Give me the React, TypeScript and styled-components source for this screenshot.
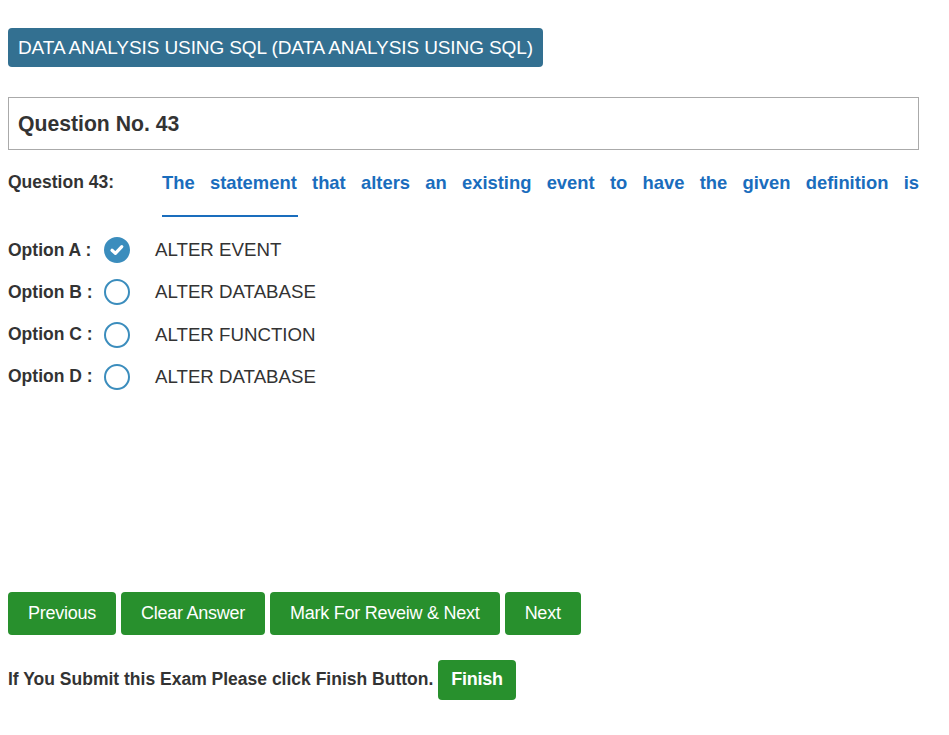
import React from "react";
import styled, { createGlobalStyle } from "styled-components";

const Global = createGlobalStyle`
  html, body { margin: 0; padding: 0; background: #fff; }
  body { font-family: "Liberation Sans", Arial, sans-serif; color: #333; }
`;

const Page = styled.div`
  padding: 28px 30px 0 8px;
  display: flex;
  flex-direction: column;
`;

const SubjectBadge = styled.div`
  align-self: flex-start;
  background: #337091;
  color: #fff;
  font-size: 19px;
  letter-spacing: -0.1px;
  line-height: 39px;
  height: 39px;
  padding: 0 10px;
  border-radius: 4px;
`;

const QuestionHead = styled.div`
  margin-top: 30px;
  border: 1px solid #aaa;
  height: 51px;
  display: flex;
  align-items: center;
  padding: 0 9px;
  font-size: 21.2px;
  font-weight: bold;
  color: #333;
`;

const QuestionRow = styled.div`
  margin-top: 20px;
  display: grid;
  grid-template-columns: 154px 1fr;
`;

const QuestionLabel = styled.div`
  font-size: 17.5px;
  font-weight: bold;
  line-height: 24px;
  color: #333;
`;

const QuestionText = styled.div`
  font-size: 18.4px;
  font-weight: bold;
  color: #1a6dbd;
  text-align: justify;
  line-height: 26px;
`;

const Blank = styled.span`
  display: inline-block;
  width: 136px;
  height: 19px;
  border-bottom: 2px solid #1a6dbd;
  vertical-align: top;
`;

const Options = styled.div`
  margin-top: 14px;
  display: flex;
  flex-direction: column;
  gap: 14.3px;
`;

const OptionRow = styled.div`
  display: flex;
  align-items: center;
  height: 28px;
`;

const OptionLabel = styled.span`
  width: 96px;
  font-size: 17.5px;
  font-weight: bold;
  color: #333;
  white-space: nowrap;
`;

const Radio = styled.span<{ $checked?: boolean }>`
  width: 26px;
  height: 26px;
  box-sizing: border-box;
  border-radius: 50%;
  border: 2px solid #3b8dbd;
  background: ${(p) => (p.$checked ? "#3b8dbd" : "#fff")};
  display: flex;
  align-items: center;
  justify-content: center;
`;

const OptionText = styled.span`
  margin-left: 25px;
  font-size: 18.7px;
  color: #333;
`;

const ButtonBar = styled.div`
  margin-top: 201px;
  display: flex;
  gap: 5px;
`;

const Button = styled.button<{ $bold?: boolean }>`
  background: #28902d;
  color: #fff;
  border: none;
  border-radius: 4px;
  font-family: "Liberation Sans", Arial, sans-serif;
  font-size: 18px;
  font-weight: ${(p) => (p.$bold ? "bold" : "normal")};
  letter-spacing: -0.25px;
  height: ${(p) => (p.$bold ? "40px" : "43px")};
  padding: 0 20px;
  cursor: pointer;
`;

const FinishRow = styled.div`
  margin-top: 25px;
  display: flex;
  align-items: center;
  gap: 5px;
`;

const FinishText = styled.span`
  font-size: 17.5px;
  font-weight: bold;
  color: #333;
`;

const FinishButton = styled(Button)`
  padding: 0 13px;
`;

const Check = () => (
  <svg width="16" height="16" viewBox="0 0 16 16">
    <path d="M3 8.3 L6.4 11.4 L12.8 4.6" fill="none" stroke="#fff" strokeWidth="3.2" strokeLinecap="round" strokeLinejoin="round" />
  </svg>
);

const options = [
  { key: "A", text: "ALTER EVENT", checked: true },
  { key: "B", text: "ALTER DATABASE" },
  { key: "C", text: "ALTER FUNCTION" },
  { key: "D", text: "ALTER DATABASE" },
];

export default function App() {
  return (
    <>
      <Global />
      <Page>
        <SubjectBadge>DATA ANALYSIS USING SQL (DATA ANALYSIS USING SQL)</SubjectBadge>
        <QuestionHead>Question No. 43</QuestionHead>
        <QuestionRow>
          <QuestionLabel>Question 43:</QuestionLabel>
          <QuestionText>
            The statement that alters an existing event to have the given definition is <Blank />
          </QuestionText>
        </QuestionRow>
        <Options>
          {options.map((o) => (
            <OptionRow key={o.key}>
              <OptionLabel>Option {o.key} :</OptionLabel>
              <Radio $checked={o.checked}>{o.checked && <Check />}</Radio>
              <OptionText>{o.text}</OptionText>
            </OptionRow>
          ))}
        </Options>
        <ButtonBar>
          <Button>Previous</Button>
          <Button>Clear Answer</Button>
          <Button>Mark For Reveiw &amp; Next</Button>
          <Button>Next</Button>
        </ButtonBar>
        <FinishRow>
          <FinishText>If You Submit this Exam Please click Finish Button.</FinishText>
          <FinishButton $bold>Finish</FinishButton>
        </FinishRow>
      </Page>
    </>
  );
}
